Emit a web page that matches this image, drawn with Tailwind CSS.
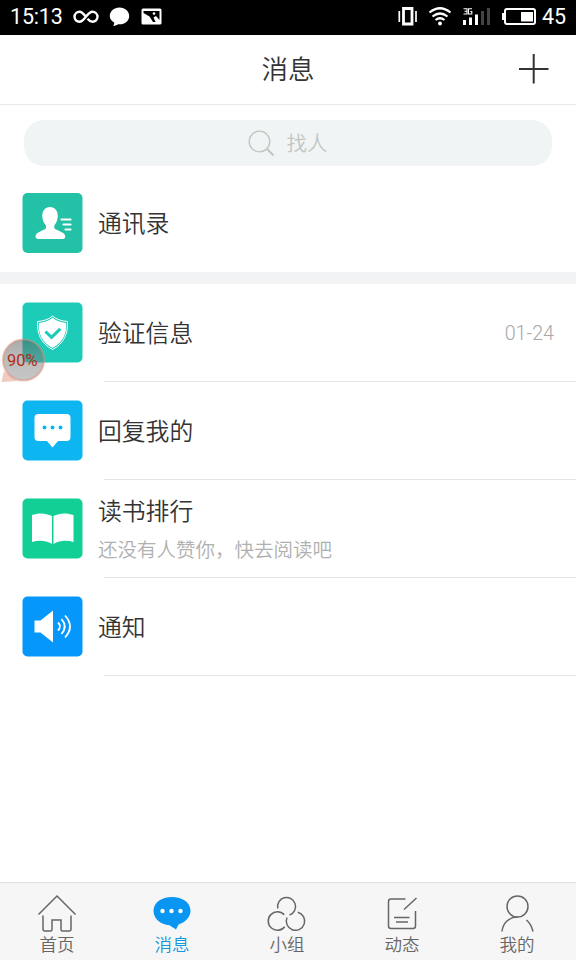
<!DOCTYPE html>
<html lang="zh-CN">
<head>
<meta charset="utf-8">
<title>消息</title>
<script src="https://cdn.jsdelivr.net/npm/@tailwindcss/browser@4"></script>
</head>
<body class="w-[576px] h-[960px] overflow-hidden bg-white text-[#333] font-[350] font-['Noto_Sans_CJK_SC',sans-serif]">
<div class="relative flex h-[960px] w-[576px] flex-col">
  <div class="flex h-[35px] shrink-0 items-center bg-black pl-[10px] pr-[10px] text-white font-['Roboto',sans-serif] font-normal">
    <span class="w-[63px] pb-[1px] text-[21.5px] leading-none tracking-[-0.2px]">15:13</span>
    <svg class="h-[35px] w-[95px]" viewBox="73 0 95 35" fill="none" stroke="#fff">
      <path d="M86 17C83.500 13.500 81.500 11.800 79.500 11.800A5 5 0 0 0 79.500 21.800C84.500 21.800 87 11.800 92.500 11.800A5 5 0 0 1 92.500 21.800C90.500 21.800 89 20.500 87.500 18.700" stroke-width="2.400"/>
      <path d="M119.500 7.500c5.600 0 9.700 3.700 9.700 8.500s-4.100 8.300-9.700 8.300l-1.500-.1c-1.200 1-3 1.600-5 1.500 .9-.9 1.300-2 1.200-3.100-2.700-1.500-4.400-3.800-4.400-6.600 0-4.800 4.100-8.500 9.700-8.500z" fill="#fff" stroke="none"/>
      <path d="M143 8.500h17q1.500 0 1.500 1.500v13q0 1.500-1.500 1.500h-17q-1.500 0-1.500-1.500v-13q0-1.500 1.500-1.500zM143.500 11v2l6 3.500 3.500 5.500h2.500l-2-4.500 2.500-1.500 3.500 4v-9z" fill="#fff" fill-rule="evenodd" stroke="none"/>
      <circle cx="154" cy="13.500" r="1.300" fill="#fff" stroke="none"/>
    </svg>
    <div class="flex-1"></div>
    <svg class="h-[35px] w-[145px]" viewBox="397 0 145 35" fill="none" stroke="#fff">
      <path d="M403.500 8.500h8.500v15.500h-8.500z" stroke-width="2.800"/>
      <path d="M399.300 11v11M416 11v11" stroke-width="1.700"/>
      <path d="M429.500 12.500Q440 4 450.500 12.500M432.500 16.500Q440 10.500 447.500 16.500M435.500 20Q440 16.500 444.500 20" stroke-width="2.200"/>
      <circle cx="440" cy="23.500" r="2" fill="#fff" stroke="none"/>
      <path d="M463.500 8.700h3.500v5.300h-3.500M464.500 11.300h2.500M472 8.700h-3.500v5.300h3.300v-2.500h-1.500" stroke-width="1.100"/>
      <path d="M464.500 20v5M470.500 17.500v7.500M476.500 14.500v10.500" stroke-width="3"/>
      <path d="M482.500 11v14M488.500 8v17" stroke="#444" stroke-width="3"/>
      <rect x="505" y="9" width="30" height="15" rx="2" stroke-width="2"/>
      <path d="M503 13v7" stroke-width="2"/>
      <path d="M521 12h12v9.500h-12z" fill="#fff" stroke="none"/>
    </svg>
    <span class="w-[24px] pb-[1px] text-[21.5px] leading-none">45</span>
  </div>

  <header class="flex h-[70px] shrink-0 items-center justify-between border-b border-[#e8eaea] px-[27px] pb-[2px]">
    <span class="w-[30px]"></span>
    <h1 class="pb-[2px] text-[26.5px] leading-[64px]">消息</h1>
    <svg class="h-[30px] w-[30px]" viewBox="0 0 30 30" stroke="#333" stroke-width="2"><path d="M0 15h29.500M14.700 0v29.500"/></svg>
  </header>

  <div class="mx-6 mt-[15px] flex h-[46px] shrink-0 items-center justify-center rounded-[20px] bg-[#f1f4f5] pr-[1px] text-[#c2c6c3]">
    <svg class="mr-[12px] h-[27px] w-[27px]" viewBox="0 0 27 27" fill="none" stroke="#c0c5bf"><circle cx="11.500" cy="11.500" r="10.300" stroke-width="1.300"/><path d="M19 19l6.500 6.500" stroke-width="2"/></svg>
    <span class="pb-[1px] text-[20.5px] leading-[45px]">找人</span>
  </div>

  <div class="flex h-[106px] shrink-0 items-center pl-[22px] pt-[7px]">
    <svg class="h-[61px] w-[61px]" viewBox="0 0 61 61"><rect x=".5" y="1" width="60" height="60" rx="5" fill="#23c2a7"/><path d="M28 15c5 0 8 4 7.800 9.500-.2 4-1.800 7-3.500 9v2.500c0 2 11 3.500 11 8.500 0 1.500-1 2.500-2.500 2.500H16c-1.500 0-2.500-1-2.500-2.500 0-5 10.500-6.500 10.500-8.500V33.500c-2-2-3.500-5-3.700-9-.2-5.500 2.700-9.500 7.700-9.500z" fill="#fff"/><path d="M39.500 27.500h9M41.500 32.500h7M43.500 37.500h5" stroke="#fff" stroke-width="2.200" stroke-linecap="round"/></svg>
    <span class="ml-[15px] pb-[2px] text-[23.8px] leading-8">通讯录</span>
  </div>
  <div class="h-3 shrink-0 bg-[#f1f3f4]"></div>

  <div class="flex h-[98px] shrink-0 pl-[22px]">
    <svg class="mt-[18px] h-[61px] w-[61px]" viewBox="0 0 61 61"><rect x=".5" y=".5" width="60" height="60" rx="5" fill="#1dcbb9"/><path d="M30.500 14c4 3.500 9 5 15 5.500 .5 11-2.500 21.500-15 28-12.500-6.500-15.500-17-15-28 6-.5 11-2 15-5.500z" fill="none" stroke="#fff" stroke-width="1"/><path d="M30.500 15.700c3.500 3 8 4.700 13.700 5.200 .4 9.800-2.500 19-13.700 25-11.200-6-14.100-15.200-13.700-25 5.700-.5 10.200-2.200 13.700-5.200z" fill="#fff"/><path d="M23.500 29.500l6 5.800 8.800-8.500" fill="none" stroke="#1dcbb9" stroke-width="3"/></svg>
    <div class="ml-[21px] flex flex-1 items-center justify-between border-b border-[#e5e6e6] pr-[22px]">
      <span class="-ml-[6px] pb-[2px] text-[23.8px] leading-8">验证信息</span>
      <span class="mt-[3px] text-[19.700px] text-[#a8a8a8] font-light font-['Roboto',sans-serif]">01-24</span>
    </div>
  </div>
  <div class="flex h-[98px] shrink-0 pl-[22px]">
    <svg class="mt-[18px] h-[61px] w-[61px]" viewBox="0 0 61 61"><rect x=".5" y=".5" width="60" height="60" rx="5" fill="#0db6f0"/><path d="M16.500 14h28q4 0 4 4v19q0 4-4 4h-8.500l-5.500 6.500L25 41h-8.500q-4 0-4-4V18q0-4 4-4z" fill="#fff"/><g fill="#0db6f0"><circle cx="22.500" cy="27.500" r="2"/><circle cx="30.500" cy="27.500" r="2"/><circle cx="38.500" cy="27.500" r="2"/></g></svg>
    <div class="ml-[21px] flex flex-1 items-center border-b border-[#e5e6e6]"><span class="-ml-[6px] pb-[2px] text-[23.8px] leading-8">回复我的</span></div>
  </div>
  <div class="flex h-[98px] shrink-0 pl-[22px]">
    <svg class="mt-[18px] h-[61px] w-[61px]" viewBox="0 0 61 61"><rect x=".5" y=".5" width="60" height="60" rx="5" fill="#12cf96"/><path d="M10 17c7-2.500 14-2 20 1v28c-6-3.500-13-4-20-2zM51.500 17c-7-2.500-14-2-20 1v28c6-3.500 13-4 20-2z" fill="#fff"/></svg>
    <div class="ml-[21px] flex flex-1 flex-col border-b border-[#e5e6e6] pt-[14px]">
      <span class="-ml-[6px] text-[23.8px] leading-8">读书排行</span>
      <span class="-ml-[6px] mt-[9px] text-[19.5px] leading-7 text-[#b0b0b0]">还没有人赞你，快去阅读吧</span>
    </div>
  </div>
  <div class="flex h-[98px] shrink-0 pl-[22px]">
    <svg class="mt-[18px] h-[61px] w-[61px]" viewBox="0 0 61 61"><rect x=".5" y=".5" width="60" height="60" rx="5" fill="#0597fb"/><path d="M12.500 24.500h6L31 14.500v32l-12.500-10h-6z" fill="#fff"/><path d="M36 26.500q4 4 0 8M39.500 23q6.500 7.500 0 15M43 19.500q10 11 0 22" fill="none" stroke="#fff" stroke-width="1.800"/></svg>
    <div class="ml-[21px] flex flex-1 items-center border-b border-[#e5e6e6]"><span class="-ml-[6px] pb-[2px] text-[23.8px] leading-8">通知</span></div>
  </div>

  <nav class="mt-auto grid h-[78px] shrink-0 grid-cols-5 border-t border-[#dedede] bg-[#f6f6f6] pr-[1px] text-[17.5px] leading-6 text-[#666]">
    <div class="flex flex-col items-center pt-[10px]">
      <svg class="mr-[1px] h-[40px] w-[40px]" viewBox="0 0 40 40" fill="none" stroke="#666" stroke-width="1.500"><path d="M1.500 21.500L20 3l18.500 18.500M6 22.500V36q0 2 2 2h5.500q1.500 0 1.500-1.500V27h9v9.500q0 1.500 1.500 1.500H32q2 0 2-2V22.500"/></svg>
      <span class="-mt-[1px] pr-[1px]">首页</span>
    </div>
    <div class="flex flex-col items-center pt-[10px] text-[#1697dd]">
      <svg class="mr-[1px] h-[40px] w-[40px]" viewBox="0 0 40 40"><path d="M20 4c10.500 0 18.500 5.500 18.500 14 0 6-5.500 11.500-12 13.500L24 36.500l-6.500-4.300C8.500 31.700 1.500 25.500 1.500 18 1.500 9.500 9.500 4 20 4z" fill="#0896f2"/><g fill="#fff"><circle cx="10.500" cy="18" r="2.200"/><circle cx="19.500" cy="18" r="2.200"/><circle cx="28.500" cy="18" r="2.200"/></g></svg>
      <span class="-mt-[1px] pr-[1px]">消息</span>
    </div>
    <div class="flex flex-col items-center pt-[10px]">
      <svg class="mr-[1px] h-[40px] w-[40px]" viewBox="0 0 40 40" fill="none" stroke="#666" stroke-width="1.500"><path d="M10.800 15.500A9 9 0 1 1 22.500 22M17.200 21.800A9.200 9.200 0 1 0 17.700 33.700M30.800 19.200A9.200 9.200 0 1 1 20 24.500"/></svg>
      <span class="-mt-[1px] pr-[1px]">小组</span>
    </div>
    <div class="flex flex-col items-center pt-[10px]">
      <svg class="mr-[1px] h-[40px] w-[40px]" viewBox="0 0 40 40" fill="none" stroke="#666" stroke-width="1.500"><path d="M23.500 6H9q-2.500 0-2.500 2.500v24.500q0 2.500 2.500 2.500h22q2.500 0 2.500-2.500V18M22 16.500L34.500 5M12 24.500h15.500M14 29h12"/></svg>
      <span class="-mt-[1px] pr-[1px]">动态</span>
    </div>
    <div class="flex flex-col items-center pt-[10px]">
      <svg class="mr-[1px] h-[40px] w-[40px]" viewBox="0 0 40 40" fill="none" stroke="#666" stroke-width="1.500"><circle cx="20.500" cy="13.500" r="10.500"/><path d="M5 38.500C6 30 12 24 20.500 24M29.500 27q5 4.500 6.500 11.500"/></svg>
      <span class="-mt-[1px] pr-[1px]">我的</span>
    </div>
  </nav>

  <div class="absolute left-0 top-[336px] h-[48px] w-[47px]">
    <svg class="absolute inset-0 h-[48px] w-[47px]" viewBox="0 0 47 48"><defs><linearGradient id="g" x1="0" y1="0" x2="0" y2="1"><stop offset="0" stop-color="#555" stop-opacity=".5"/><stop offset=".4" stop-color="#777" stop-opacity=".5"/><stop offset="1" stop-color="#777" stop-opacity=".42"/></linearGradient></defs><path d="M4 35L1.500 46l16-1z" fill="#e9b9ab" fill-opacity=".75"/><circle cx="23.500" cy="24" r="20.500" fill="url(#g)" stroke="#dc8c76" stroke-opacity=".5" stroke-width="2.200"/></svg>
    <span class="absolute left-[7px] top-[13px] text-[16.5px] leading-[23px] text-[#b32c16] font-normal font-['Roboto',sans-serif]">90%</span>
  </div>
</div>
</body>
</html>
